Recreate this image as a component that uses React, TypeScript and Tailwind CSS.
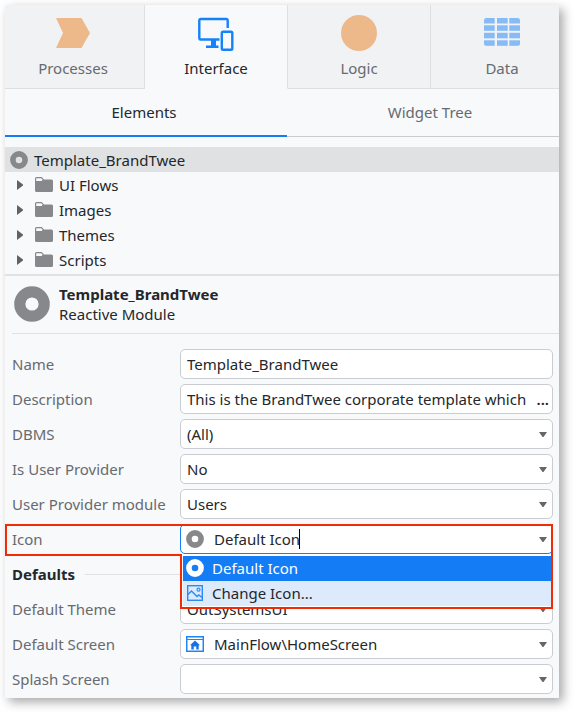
import { useState, type ReactNode } from "react";

const mainTabs = ["Processes", "Interface", "Logic", "Data"];
const folders = ["UI Flows", "Images", "Themes", "Scripts"];

function RingIcon({ className }: { className: string }) {
  return (
    <svg viewBox="0 0 36 36" className={className} aria-hidden="true">
      <circle cx="18" cy="18" r="12.200" fill="none" stroke="currentColor" strokeWidth="11.200" />
    </svg>
  );
}

function FolderIcon() {
  return (
    <svg width="18" height="16" viewBox="0 0 18 16" className="shrink-0 text-[#87888b]" aria-hidden="true">
      <path d="M0.600 6V1.600Q0.600 0.600 1.600 0.600H6.500L8.500 2.800" fill="none" stroke="currentColor" strokeWidth="1.200" />
      <path d="M0 4H6.500L8 2.500H16.500Q18 2.500 18 4V13.500Q18 15 16.500 15H1.500Q0 15 0 13.500Z" fill="currentColor" />
    </svg>
  );
}

function ProcessIcon() {
  return (
    <svg width="36" height="36" viewBox="0 0 36 36" aria-hidden="true">
      <path d="M1 3H26.500L35 18L26.500 33H1L8 18Z" fill="#edb98b" />
    </svg>
  );
}

function InterfaceIcon() {
  return (
    <svg width="36" height="36" viewBox="0 0 36 36" aria-hidden="true">
      <g transform="translate(-0.500 0)">
        <path d="M22 24.500H3Q1.800 24.500 1.800 23.200V5.300Q1.800 4 3 4H29Q30.200 4 30.200 5.300V13" fill="none" stroke="#1482fa" strokeWidth="2.400" />
        <path d="M13.500 24H18.500V30.500H21V33H8.500V30.500H13.500Z" fill="#1482fa" />
        <rect x="24.300" y="16.700" width="10.500" height="18" rx="1.300" fill="none" stroke="#1482fa" strokeWidth="2.400" />
      </g>
    </svg>
  );
}

function LogicIcon() {
  return (
    <svg width="36" height="36" viewBox="0 0 36 36" aria-hidden="true">
      <circle cx="18" cy="18" r="18" fill="#edb98b" />
    </svg>
  );
}

function DataIcon() {
  return (
    <svg width="36" height="36" viewBox="0 0 36 36" aria-hidden="true">
      <clipPath id="data-grid">
        <rect y="3" width="36" height="28" rx="2.500" />
      </clipPath>
      <g clipPath="url(#data-grid)" fill="#86bbf5">
        {[3, 10.3, 17.8, 25.3].map((y) =>
          [0, 13, 25.3].map((x) => <rect key={`${x}-${y}`} x={x} y={y} width="10.700" height="5.500" />)
        )}
      </g>
    </svg>
  );
}

function PictureIcon() {
  return (
    <svg width="18" height="18" viewBox="0 0 18 18" fill="none" stroke="#2b8bf2" className="shrink-0" aria-hidden="true">
      <rect x="1.700" y="1.700" width="14.600" height="14.600" strokeWidth="1.400" />
      <path d="M2 10.500L5.500 7L11 12.500L12.800 11L16 13.500" strokeWidth="1.400" />
      <circle cx="12.500" cy="5.700" r="1.500" strokeWidth="1.200" />
    </svg>
  );
}

function HomeScreenIcon() {
  return (
    <svg width="18" height="16" viewBox="0 0 18 16" aria-hidden="true">
      <rect x="0.750" y="0.750" width="16.500" height="14.500" fill="none" stroke="#1f86f5" strokeWidth="1.500" />
      <path d="M1 3.500H17" stroke="#1f86f5" />
      <path d="M9 4.500L14 9.300H12.700V13.500H10.300V10.500H7.700V13.500H5.300V9.300H4Z" fill="#1473e6" />
    </svg>
  );
}

function DownArrow() {
  return (
    <svg width="8" height="5" viewBox="0 0 8 5" className="pointer-events-none col-start-1 row-start-1 mr-[5px] self-center justify-self-end text-[#63666b]" aria-hidden="true">
      <path d="M0 0H8L4.500 5H3.500Z" fill="currentColor" />
    </svg>
  );
}

const tabIcons = [<ProcessIcon />, <InterfaceIcon />, <LogicIcon />, <DataIcon />];

function Row({ id, label, children }: { id: string; label: string; children: ReactNode }) {
  return (
    <div className="flex h-[30px] items-center">
      <label htmlFor={id} className="w-[168px] shrink-0 text-[#676a6f]">{label}</label>
      {children}
    </div>
  );
}

function SelectRow({ id, label, value, icon }: { id: string; label: string; value: string; icon?: ReactNode }) {
  return (
    <Row id={id} label={label}>
      <div className="grid h-full min-w-0 flex-1 rounded-[5px] border border-[#c9ccd0] bg-white">
        <select
          id={id}
          className={`col-start-1 row-start-1 w-full appearance-none rounded-[5px] bg-transparent pr-5 ${icon ? "pl-[33px]" : "pl-[6px]"}`}
        >
          <option>{value}</option>
        </select>
        {icon && <span className="pointer-events-none col-start-1 row-start-1 ml-[5px] self-center justify-self-start">{icon}</span>}
        <DownArrow />
      </div>
    </Row>
  );
}

export default function App() {
  const [name, setName] = useState("Template_BrandTwee");
  const [description, setDescription] = useState("This is the BrandTwee corporate template which");
  const [icon, setIcon] = useState("Default Icon");

  return (
    <div className="bg-white pt-[5px] pr-[15px] pb-[15px] pl-[5px] font-['Noto_Sans',sans-serif] text-[15px] leading-5 text-[#24272b]">
      <main className="bg-[#f7f9fb] pb-1 shadow-[4px_4px_10px_rgba(0,0,0,0.35)]">
        <div className="overflow-hidden">
          <nav className="-mr-[15px] -ml-[3px] grid grid-cols-4">
            {mainTabs.map((tab, i) => (
              <button
                key={tab}
                className={`flex h-[84px] flex-col items-center gap-[7px] border-r border-b border-r-[#dddfe2] pt-[10px] ${
                  tab === "Interface" ? "border-b-transparent" : "border-b-[#dddfe2] bg-[#f0f2f4] text-[#676a6f]"
                }`}
              >
                {tabIcons[i]}
                {tab}
              </button>
            ))}
          </nav>
          <nav className="-mr-[14px] -ml-1 grid h-12 grid-cols-2">
            <button className="border-b-2 border-[#147cf5]">Elements</button>
            <button className="border-b border-[#c9ccd0] pb-px text-[#676a6f]">Widget Tree</button>
          </nav>
        </div>

        <ul className="mt-[10px] border-b-2 border-[#dfe1e3] pb-[2px]">
          <li className="flex h-[25px] items-center gap-[6px] bg-[#dfe1e3] pl-[5px]">
            <RingIcon className="size-[18px] text-[#87888b]" />
            Template_BrandTwee
          </li>
          {folders.map((folder) => (
            <li key={folder} className="flex h-[25px] items-center pl-3">
              <svg width="6" height="10" viewBox="0 0 6 10" className="mr-3 shrink-0 text-[#5f6368]" aria-hidden="true">
                <path d="M0 0L6 4.500V5.500L0 10Z" fill="currentColor" />
              </svg>
              <FolderIcon />
              <span className="ml-[6px]">{folder}</span>
            </li>
          ))}
        </ul>

        <header className="ml-[7px] flex items-center gap-[9px] border-b border-[#dfe1e3] pt-2 pb-[9px] pl-[2px]">
          <RingIcon className="size-9 text-[#87888b]" />
          <div>
            <h1 className="font-bold">Template_BrandTwee</h1>
            <p>Reactive Module</p>
          </div>
        </header>

        <form className="mt-[15px] mr-[6px] ml-[7px] flex flex-col gap-[5px]">
          <Row id="name" label="Name">
            <input
              id="name"
              value={name}
              onChange={(e) => setName(e.target.value)}
              className="h-full min-w-0 flex-1 rounded-[5px] border border-[#c9ccd0] bg-white px-[6px]"
            />
          </Row>
          <Row id="description" label="Description">
            <div className="flex h-full min-w-0 flex-1 rounded-[5px] border border-[#c9ccd0] bg-white pr-[3px] pl-[6px]">
              <input
                id="description"
                value={description}
                onChange={(e) => setDescription(e.target.value)}
                className="min-w-0 flex-1"
              />
              <button type="button" aria-label="Edit description" className="font-semibold">...</button>
            </div>
          </Row>
          <SelectRow id="dbms" label="DBMS" value="(All)" />
          <SelectRow id="is-provider" label="Is User Provider" value="No" />
          <SelectRow id="provider-module" label="User Provider module" value="Users" />

          <div className="relative">
            <Row id="icon" label="Icon">
              <div className="grid h-full min-w-0 flex-1 rounded-[5px] border border-[#147cf5] bg-white">
                <div className="col-start-1 row-start-1 flex items-center pl-[5px]">
                  <RingIcon className="mr-[10px] size-[18px] text-[#87888b]" />
                  <input
                    id="icon"
                    role="combobox"
                    aria-expanded="true"
                    aria-controls="icon-options"
                    value={icon}
                    onChange={(e) => setIcon(e.target.value)}
                    className="field-sizing-content outline-none"
                  />
                  <span className="-ml-px h-5 w-px bg-black" />
                </div>
                <DownArrow />
              </div>
            </Row>
            <div className="pointer-events-none absolute top-0 right-0 -left-[7px] h-8 border-2 border-[#f02b05]" />
            <ul
              id="icon-options"
              role="listbox"
              className="absolute top-[30px] right-0 left-[168px] border-x-2 border-b-2 border-[#f02b05] bg-white pt-[2px] pb-px pl-px"
            >
              <li role="option" aria-selected="true" className="flex h-[25px] items-center gap-2 bg-[#147cf5] pb-px pl-[3px] text-white">
                <RingIcon className="size-[18px]" />
                Default Icon
              </li>
              <li role="option" aria-selected="false" className="flex h-[25px] items-center gap-2 bg-[#dceafb] pb-px pl-[3px]">
                <PictureIcon />
                Change Icon...
              </li>
            </ul>
          </div>

          <div className="flex h-[30px] items-center gap-[10px]">
            <h2 className="font-bold">Defaults</h2>
            <div className="h-px flex-1 bg-[#dfe1e3]" />
          </div>
          <SelectRow id="theme" label="Default Theme" value="OutSystemsUI" />
          <SelectRow id="screen" label="Default Screen" value="MainFlow\HomeScreen" icon={<HomeScreenIcon />} />
          <SelectRow id="splash" label="Splash Screen" value="" />
        </form>
      </main>
    </div>
  );
}
